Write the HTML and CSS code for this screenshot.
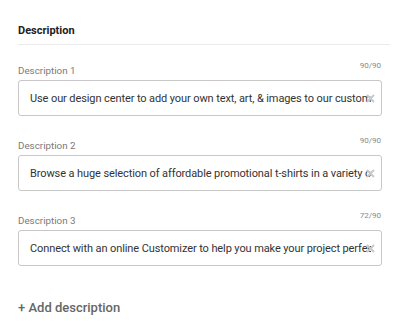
FILE: index.html
```html
<!DOCTYPE html>
<html lang="en">
<head>
<meta charset="UTF-8">
<title>Description</title>
<link rel="stylesheet" href="styles.css">
</head>
<body>

<div class="panel">
    <h2 class="title">Description</h2>

    <div class="field">
        <div class="field-head">
            <span class="label">Description 1</span>
            <span class="count">90/90</span>
        </div>
        <div class="box">
            <span class="text">Use our design center to add your own text, art, &amp; images to our custom t-shirts today</span>
            <svg class="clear" width="9" height="9" viewBox="0 0 9 9"><path d="M1 1L8 8M8 1L1 8"/></svg>
        </div>
    </div>

    <div class="field">
        <div class="field-head">
            <span class="label">Description 2</span>
            <span class="count">90/90</span>
        </div>
        <div class="box">
            <span class="text">Browse a huge selection of affordable promotional t-shirts in a variety of colors and sizes</span>
            <svg class="clear" width="9" height="9" viewBox="0 0 9 9"><path d="M1 1L8 8M8 1L1 8"/></svg>
        </div>
    </div>

    <div class="field">
        <div class="field-head">
            <span class="label">Description 3</span>
            <span class="count">72/90</span>
        </div>
        <div class="box">
            <span class="text">Connect with an online Customizer to help you make your project perfect.</span>
            <svg class="clear" width="9" height="9" viewBox="0 0 9 9"><path d="M1 1L8 8M8 1L1 8"/></svg>
        </div>
    </div>

    <a class="add" href="#">+ Add description</a>
</div>

</body>
</html>
```

FILE: styles.css
```css
body {
    font-family: Roboto, Arial, sans-serif;
    background-color: #fff;
    margin: 0;
    padding: 0;
}

.panel {
    padding: 24px 21px 0 18px;
}

.title {
    font-size: 11px;
    font-weight: bold;
    color: #212121;
    margin: 0;
    padding-bottom: 7px;
    border-bottom: 1px solid #ebebeb;
    line-height: 13px;
}

.field {
    margin-top: 16px;
    width: 364px;
}

.field + .field {
    margin-top: 20px;
}

.field-head {
    display: flex;
    justify-content: space-between;
    align-items: flex-start;
    height: 19px;
}

.label {
    font-size: 9.8px;
    line-height: 12px;
    color: #7a7a7a;
    margin-top: 4px;
}

.count {
    font-size: 8px;
    line-height: 10px;
    color: #888;
    margin-right: 1px;
}

.box {
    position: relative;
    height: 34px;
    border: 1px solid #c8c8c8;
    border-radius: 3px;
    padding: 0 10px 0 11px;
    display: flex;
    align-items: center;
    overflow: hidden;
}

.text {
    font-size: 11px;
    letter-spacing: -0.1px;
    color: #333;
    white-space: nowrap;
    overflow: hidden;
}

.clear {
    position: absolute;
    right: 6px;
    top: 13px;
    stroke: #c9c9c9;
    stroke-width: 2;
    fill: none;
}

.add {
    display: inline-block;
    margin-top: 34px;
    font-size: 13px;
    line-height: 15px;
    font-weight: 500;
    color: #666;
    text-decoration: none;
}
```
